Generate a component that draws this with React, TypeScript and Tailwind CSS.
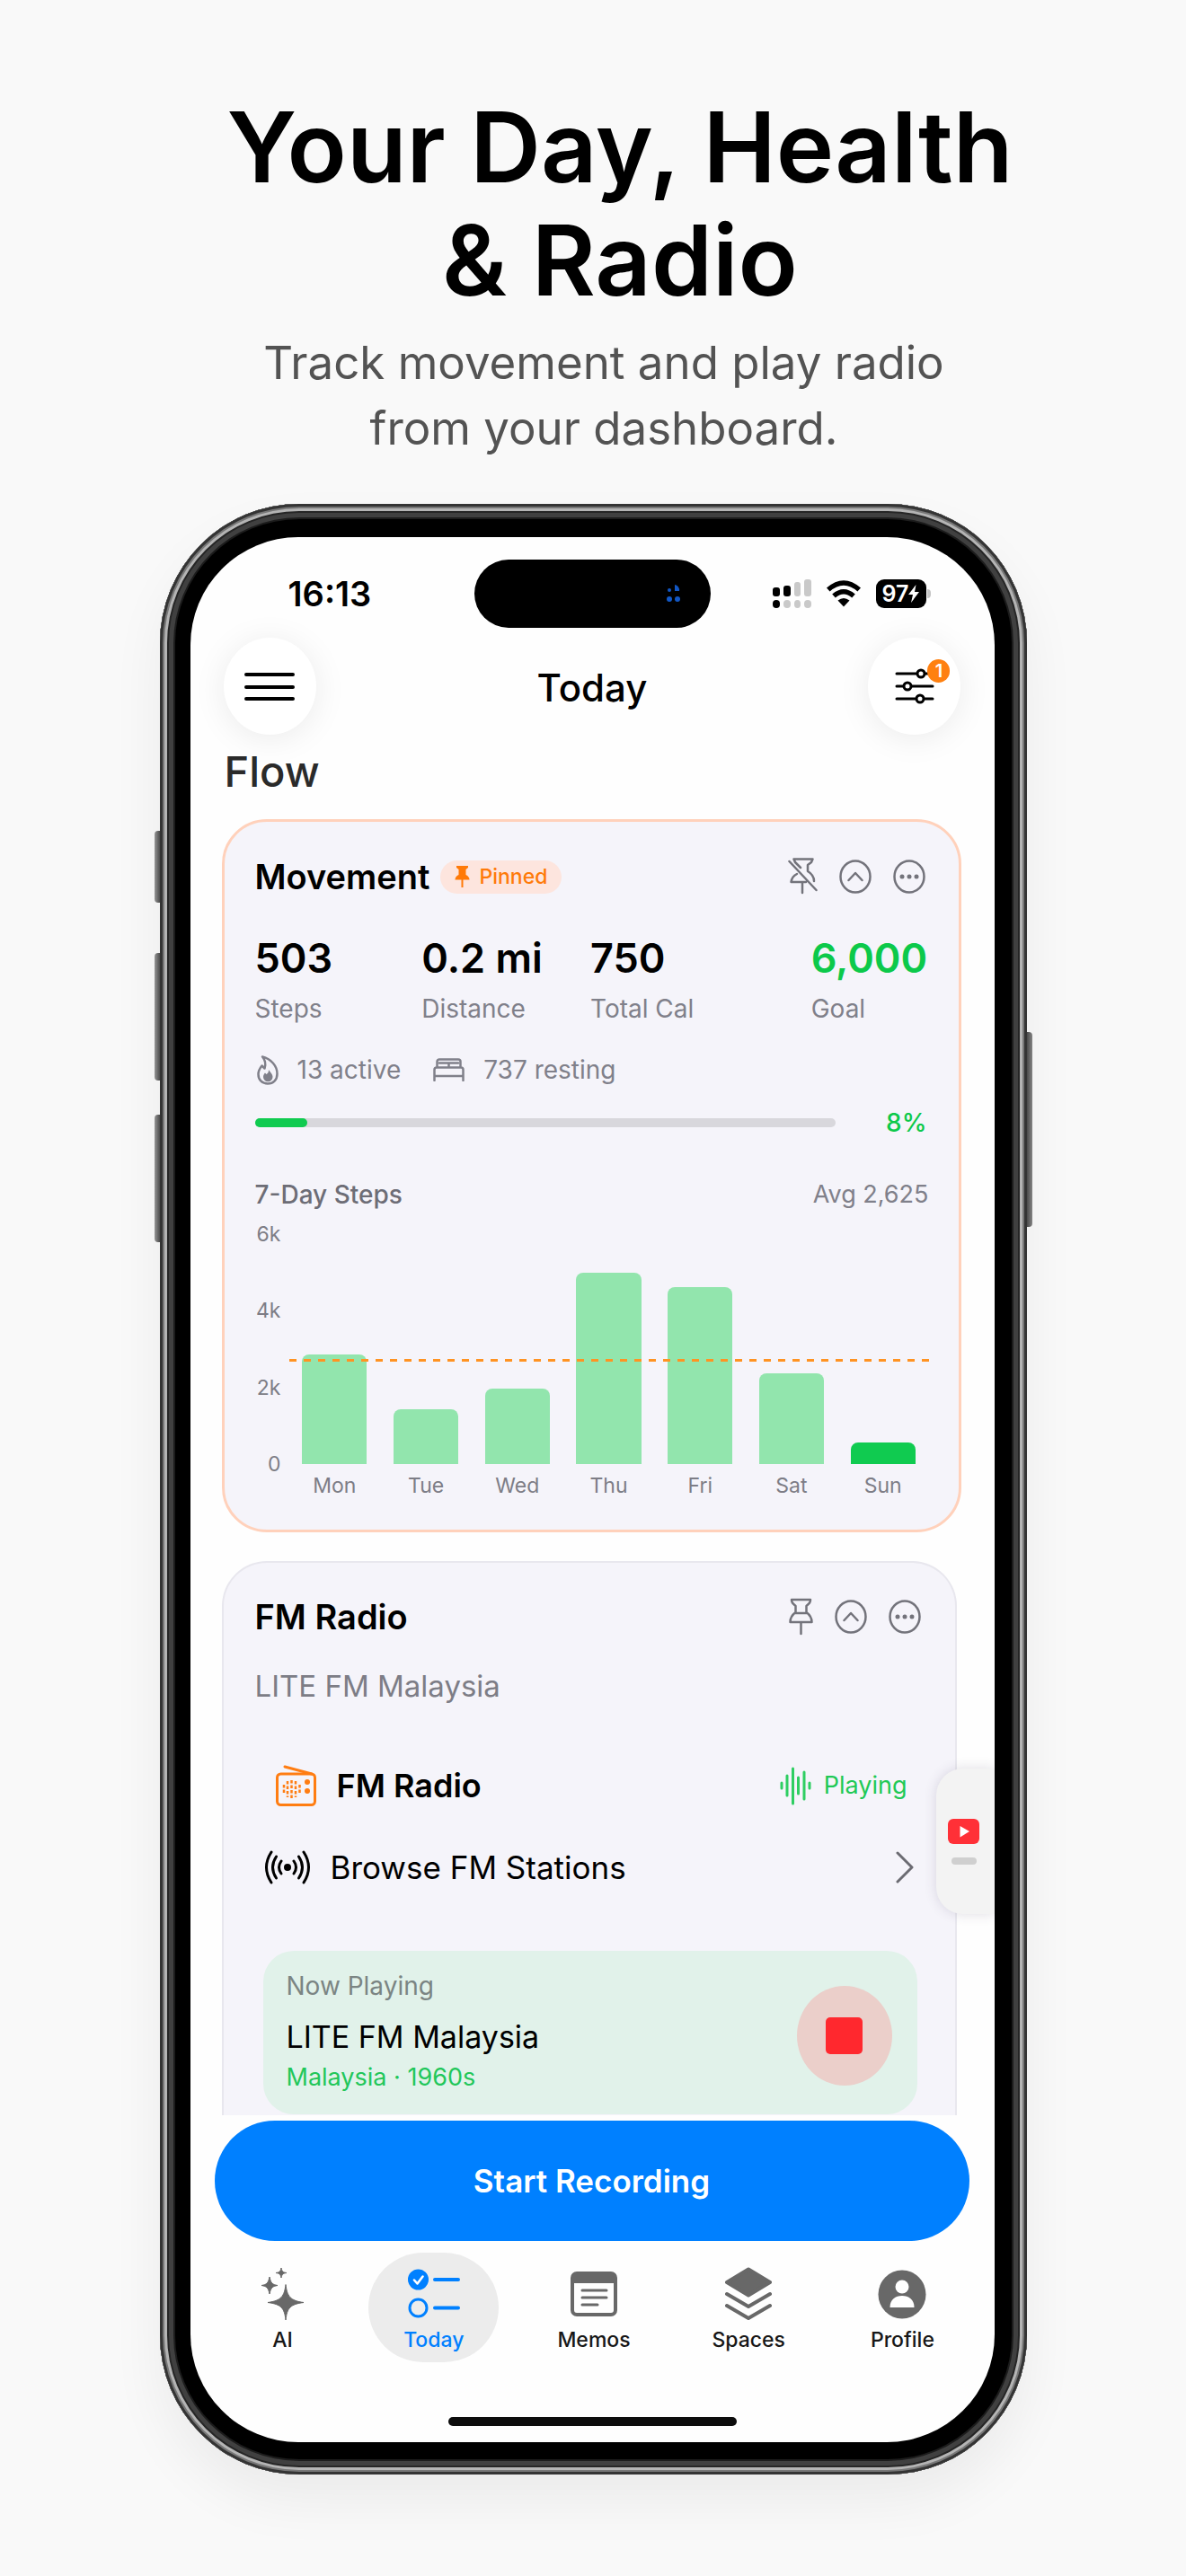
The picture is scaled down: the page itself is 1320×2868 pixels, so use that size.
import type { ReactNode } from "react"

const days = [
  { day: "Mon", steps: 2850 },
  { day: "Tue", steps: 1440 },
  { day: "Wed", steps: 1980 },
  { day: "Thu", steps: 5000 },
  { day: "Fri", steps: 4620 },
  { day: "Sat", steps: 2360 },
  { day: "Sun", steps: 560, today: true },
]

const stats = [
  { value: "503", label: "Steps" },
  { value: "0.2 mi", label: "Distance" },
  { value: "750", label: "Total Cal" },
  { value: "6,000", label: "Goal", goal: true },
]

function StatusBar() {
  return (
    <div className="grid grid-cols-[1fr_263px_1fr] items-center pt-[25px]">
      <div className="pl-[109px] text-[38px] leading-[44px] font-semibold">16:13</div>
      <div className="flex h-[76px] items-center justify-end rounded-full bg-black pr-[33px]">
        <svg width="16" height="20" viewBox="0 0 16 20" fill="#1257c4">
          <circle cx="3" cy="6" r="2" />
          <path d="M9 0a6 6 0 0 1 5 7H9z" />
          <circle cx="3" cy="16" r="3" />
          <circle cx="12" cy="16" r="3" />
        </svg>
      </div>
      <div className="flex items-center gap-[17px] pl-[69px]">
        <svg width="43" height="32" viewBox="0 0 43 32">
          <rect x="0" y="9" width="8" height="10" rx="3" />
          <rect x="12" y="7" width="8" height="12" rx="3" />
          <rect x="24" y="3" width="7" height="16" rx="3" fill="#c9c9c9" />
          <rect x="35" y="0" width="8" height="19" rx="3" fill="#c9c9c9" />
          <rect x="0" y="23" width="8" height="9" rx="4" />
          <rect x="12" y="23" width="8" height="9" rx="4" fill="#c9c9c9" />
          <rect x="24" y="23" width="7" height="9" rx="4" fill="#c9c9c9" />
          <rect x="35" y="23" width="8" height="9" rx="4" fill="#c9c9c9" />
        </svg>
        <svg width="38" height="30" viewBox="0 0 38 30" fill="none" stroke="#000" strokeWidth="5.5">
          <path d="M1.8 10.5Q19-4.500 36.200 10.500" />
          <path d="M8 17.500Q19 8 30 17.500" />
          <path d="M12.500 22.500Q19 17.500 25.500 22.500L19 29.500z" fill="#000" stroke="none" />
        </svg>
        <div className="flex items-center gap-px">
          <div className="flex h-8 w-14 items-center justify-center rounded-[9px] bg-black text-[25px] leading-8 font-semibold text-white">
            97
            <svg width="12" height="20" viewBox="0 0 12 20" fill="#fff">
              <path d="M8.500 0L0 11h5L3 20l9-12H7z" />
            </svg>
          </div>
          <div className="h-[10px] w-1 rounded-r-full bg-[#c4c4c4]" />
        </div>
      </div>
    </div>
  )
}

function Header() {
  return (
    <header className="mt-[11px] flex items-center justify-between px-[37px]">
      <button aria-label="Menu" className="flex h-[108px] w-[103px] items-center justify-center rounded-[50%] bg-white shadow-[0_4px_36px_rgba(0,0,0,0.08)]">
        <svg width="56" height="32" viewBox="0 0 56 32" stroke="#000" strokeWidth="4" strokeLinecap="round">
          <path d="M2 3h52M2 17h52M2 30h52" />
        </svg>
      </button>
      <h1 className="pt-1 text-[42px] leading-[52px] font-medium">Today</h1>
      <button aria-label="Filters, 1 active" className="relative flex h-[108px] w-[103px] items-center justify-center rounded-[50%] bg-white shadow-[0_4px_36px_rgba(0,0,0,0.08)]">
        <svg width="44" height="40" viewBox="0 0 44 40" fill="#fff" stroke="#000" strokeWidth="3" strokeLinecap="round">
          <path d="M2 6h40M2 20h40M2 34h40" />
          <circle cx="29" cy="6" r="4" />
          <circle cx="14" cy="20" r="4" />
          <circle cx="28" cy="34" r="4" />
        </svg>
        <span className="absolute top-6 right-3 flex h-[26px] w-[25px] items-center justify-center rounded-full bg-[#ff8010] text-[20px] leading-6 font-semibold text-white">1</span>
      </button>
    </header>
  )
}

function PinIcon() {
  return (
    <svg width="27" height="42" viewBox="0 0 27 42" fill="none" stroke="#73737b" strokeWidth="2.500" strokeLinecap="round" strokeLinejoin="round">
      <path d="M3 2h21c0 3-1 4-4.500 7v7c4 3 6 6 6 11H1.500c0-5 2-8 6-11V9C4 6 3 5 3 2zM8 17h11M13.500 27v13" />
    </svg>
  )
}

function UnpinIcon() {
  return (
    <svg width="33" height="42" viewBox="0 0 33 42" fill="none" stroke="#73737b" strokeWidth="2.500" strokeLinecap="round" strokeLinejoin="round">
      <path d="M14 11L8 5 6.500 1.500h21L26 5l-4 3v7c5 3 7 6 7 11M10 18c-4 2-6 5-6.500 9H20M16 27v12M1.500 4l30 32" />
    </svg>
  )
}

function CardActions({ pin, children }: { pin: string; children: ReactNode }) {
  return (
    <div className="ml-auto flex items-center gap-6 pr-1">
      <button aria-label={pin}>{children}</button>
      <button aria-label="Collapse">
        <svg width="36" height="38" viewBox="0 0 36 38" fill="none" stroke="#73737b" strokeWidth="2.500" strokeLinecap="round" strokeLinejoin="round">
          <ellipse cx="18" cy="19" rx="16.500" ry="17.500" />
          <path d="M10.500 23l7.500-8 7.500 8" />
        </svg>
      </button>
      <button aria-label="More">
        <svg width="36" height="38" viewBox="0 0 36 38" fill="none" stroke="#73737b" strokeWidth="2.500">
          <ellipse cx="18" cy="19" rx="16.500" ry="17.500" />
          <g fill="#73737b" stroke="none">
            <circle cx="10" cy="19" r="2.500" />
            <circle cx="18" cy="19" r="2.500" />
            <circle cx="26" cy="19" r="2.500" />
          </g>
        </svg>
      </button>
    </div>
  )
}

function StepsChart() {
  return (
    <div className="mt-[26px]">
      <div className="flex h-64">
        <div className="-my-4 flex w-[38px] flex-col justify-between pr-[9px] text-right text-[23px] leading-8 text-[#7d7d86]">
          <span>6k</span>
          <span>4k</span>
          <span>2k</span>
          <span>0</span>
        </div>
        <div className="relative flex flex-1 items-end">
          {days.map((d) => (
            <div key={d.day} className="flex h-full flex-1 items-end justify-center">
              <div
                className={d.today ? "w-[71%] rounded-t-lg bg-[#10cb50]" : "w-[71%] rounded-t-lg bg-[#92e5ad]"}
                style={{ height: `${(d.steps / 6000) * 100}%` }}
              />
            </div>
          ))}
          <svg className="absolute top-[139px] left-0 h-[3px] w-full">
            <line x1="0" y1="1.500" x2="100%" y2="1.500" stroke="#ff9322" strokeWidth="3" strokeDasharray="8 8" />
          </svg>
        </div>
      </div>
      <div className="mt-2 flex pl-[38px] text-center text-[23px] leading-8 text-[#7d7d86]">
        {days.map((d) => (
          <span key={d.day} className="flex-1">{d.day}</span>
        ))}
      </div>
    </div>
  )
}

function MovementCard() {
  return (
    <section className="mt-[23px] mr-[37px] ml-[35px] rounded-[50px] border-3 border-[#ffd1bb] bg-[#f5f4fa] pt-[41px] pr-[33px] pb-[33px] pl-[34px]">
      <div className="flex h-10 items-center">
        <h2 className="text-[38px] leading-10 font-semibold">Movement</h2>
        <span className="ml-3 flex h-[37px] items-center gap-[10px] rounded-full bg-[#fde5de] px-4 text-[23px] leading-8 font-medium text-[#ff7a08]">
          <svg width="17" height="24" viewBox="0 0 17 24" fill="#ff7a08">
            <path d="M2 0h13v2l-2.500 2v6q4 2 4 5.500H9.500V24h-2v-8.500H.5Q.5 12 4.500 10V4L2 2z" />
          </svg>
          Pinned
        </span>
        <CardActions pin="Unpin">
          <UnpinIcon />
        </CardActions>
      </div>
      <dl className="mt-[43px] grid grid-cols-[186fr_188fr_246fr_131fr]">
        {stats.map((s) => (
          <div key={s.label} className="flex flex-col-reverse gap-[10px] whitespace-nowrap">
            <dt className="text-[28px] leading-9 text-[#80808a]">{s.label}</dt>
            <dd className={s.goal ? "text-[45px] leading-[56px] font-semibold text-[#0cc94a]" : "text-[45px] leading-[56px] font-semibold"}>{s.value}</dd>
          </div>
        ))}
      </dl>
      <div className="mt-8 flex items-center text-[28px] leading-9 text-[#80808a]">
        <svg className="ml-[2px]" width="24" height="33" viewBox="0 0 24 33" fill="none" stroke="#80808a" strokeWidth="2.500" strokeLinejoin="round">
          <path d="M6 1.500C16 4 22.500 12 22.500 20.500c0 7-4.500 11-10.500 11s-10.500-4-10.500-10.500c0-4 2-7 4-9.500l3 3C10 10 9 5 6 1.500z" />
          <path d="M13 16c1 2 4.500 4.500 4.500 8a5 5 0 0 1-10.500 0c0-2 1-3.500 2-4.500l1.500 1.500c2-1 2.500-3 2.500-5z" fill="#80808a" stroke="none" />
        </svg>
        <span className="ml-[21px]">13 active</span>
        <svg className="ml-9" width="35" height="26" viewBox="0 0 35 26" fill="none" stroke="#80808a" strokeWidth="2.500" strokeLinecap="round">
          <path d="M4.500 10V4a2.500 2.500 0 0 1 2.500-2.500h21A2.500 2.500 0 0 1 30.500 4v6M7 5.500h21M17.500 6v4M1.500 25V13a2.500 2.500 0 0 1 2.500-2.500h27a2.500 2.500 0 0 1 2.500 2.500v12M2 20h31" />
        </svg>
        <span className="ml-[21px]">737 resting</span>
      </div>
      <div className="mt-[23px] flex items-center">
        <div className="h-[10px] flex-1 rounded-full bg-[#d8d7dc]">
          <div className="h-full w-[9%] rounded-full bg-[#10cb50]" />
        </div>
        <span className="w-[104px] pr-[2px] text-right text-[28px] leading-9 font-medium text-[#0cc94a]">8%</span>
      </div>
      <div className="mt-11 flex items-center justify-between text-[28px] leading-9">
        <h3 className="font-medium text-[#6d6d76]">7-Day Steps</h3>
        <span className="text-[27px] text-[#80808a]">Avg 2,625</span>
      </div>
      <StepsChart />
    </section>
  )
}

function RadioCard() {
  return (
    <section className="mt-8 mr-[42px] ml-[35px] rounded-t-[50px] border-2 border-b-0 border-[#e8e7ee] bg-[#f5f4fa] pt-10 pr-[34px] pb-px pl-[35px]">
      <div className="flex h-10 items-center">
        <h2 className="text-[38px] leading-10 font-semibold">FM Radio</h2>
        <CardActions pin="Pin">
          <PinIcon />
        </CardActions>
      </div>
      <p className="mt-9 text-[33px] leading-[42px] text-[#7d7d86]">LITE FM Malaysia</p>
      <div className="mt-[66px] flex h-12 items-center pr-[19px] pl-[23px]">
        <svg width="45" height="46" viewBox="0 0 45 46" fill="none" stroke="#ff7d12" strokeWidth="3" strokeLinecap="round">
          <rect x="1.500" y="10" width="42" height="34.500" rx="4" />
          <path d="M10 2l30 8" />
          <path d="M9 22v11M13 18v18M17.500 17v20M22 18v18M26.500 22v11" strokeWidth="2.500" strokeDasharray="3.500 2" strokeLinecap="butt" />
          <g fill="#ff7d12" stroke="none">
            <circle cx="35" cy="19" r="3" />
            <circle cx="35" cy="29" r="3" />
          </g>
        </svg>
        <h3 className="ml-[23px] text-[36px] leading-[44px] font-semibold">FM Radio</h3>
        <svg className="ml-auto" width="35" height="43" viewBox="0 0 35 43" stroke="#2fce62" strokeWidth="3" strokeLinecap="round">
          <path d="M2 18v6M8 10v22M14.500 2v39M20.500 12v18M27 6v30M33 18v6" />
        </svg>
        <span className="ml-[14px] text-[27px] leading-9 text-[#1fc956]">Playing</span>
      </div>
      <a href="#stations" className="mt-[43px] flex h-12 items-center pr-3 pl-[10px]">
        <svg width="52" height="38" viewBox="0 0 52 38" fill="none" stroke="#000" strokeWidth="3" strokeLinecap="round">
          <circle cx="26" cy="19" r="4" fill="#000" stroke="none" />
          <path d="M33 12q5 7 0 14M19 12q-5 7 0 14M38.500 7q8 12 0 24M13.500 7q-8 12 0 24M44 2q11 17 0 34M8 2q-11 17 0 34" />
        </svg>
        <span className="ml-[22px] text-[35px] leading-[44px]">Browse FM Stations</span>
        <svg className="ml-auto" width="20" height="36" viewBox="0 0 20 36" fill="none" stroke="#6b6b72" strokeWidth="3" strokeLinecap="round" strokeLinejoin="round">
          <path d="M2 2l16 16L2 34" />
        </svg>
      </a>
      <div className="mt-[69px] mr-2 ml-[9px] flex items-center justify-between rounded-[34px] bg-[#e1f2ea] pt-[22px] pr-[28px] pb-6 pl-[26px]">
        <div>
          <p className="text-[28px] leading-[34px] text-[#7b8583]">Now Playing</p>
          <p className="mt-[18px] text-[34px] leading-[44px]">LITE FM Malaysia</p>
          <p className="mt-[6px] text-[27px] leading-[34px] text-[#22c75a]">Malaysia · 1960s</p>
        </div>
        <button aria-label="Stop" className="mt-2 flex h-[111px] w-[106px] items-center justify-center rounded-[50%] bg-[#ebcfca]">
          <span className="h-[41px] w-[41px] rounded-[5px] bg-[#ff282e]" />
        </button>
      </div>
    </section>
  )
}

function Tab({ label, active, children }: { label: string; active?: boolean; children: ReactNode }) {
  return (
    <a
      href="#tab"
      className={
        active
          ? "flex h-[122px] w-[145px] flex-col items-center justify-self-center rounded-full bg-[#ececec] pt-4 text-[#0080ff]"
          : "flex h-[122px] w-[145px] flex-col items-center justify-self-center pt-4 text-[#171717]"
      }
    >
      <span className="flex h-[60px] items-center">{children}</span>
      <span className="mt-[6px] text-[23px] leading-[30px] font-medium">{label}</span>
    </a>
  )
}

function TabBar() {
  return (
    <nav className="mt-[13px] grid grid-cols-[150fr_186fr_170fr_174fr_168fr] pr-[18px] pl-7">
      <Tab label="AI">
        <svg width="47" height="58" viewBox="0 0 47 58" fill="#686868">
          <path d="M27 18.500c1.500 13 5 18 20 20-15 2-18.500 6-20 19.500-1.500-13.500-5-17.500-20-19.500 15-2 18.500-7 20-20zM9 10c1.500 7 3 8.500 9 9.500-6 1-7.500 2.500-9 9.500-1.500-7-3-8.500-9-9.500 6-1 7.500-2.500 9-9.500zM22 0c.8 4 2 5 6 5.500-4 .500-5.200 1.500-6 5.500-.8-4-2-5-6-5.500 4-.500 5.200-1.500 6-5.500z" stroke="#686868" strokeWidth="1" strokeLinejoin="round" />
        </svg>
      </Tab>
      <Tab label="Today" active>
        <svg width="58" height="56" viewBox="0 0 58 56" fill="none" stroke="#0080ff" strokeWidth="3" strokeLinecap="round" strokeLinejoin="round">
          <circle cx="11.500" cy="12" r="10" fill="#0080ff" />
          <path d="M7 12.500l3.500 4 6-8" stroke="#fff" strokeWidth="2.500" />
          <circle cx="11.500" cy="43.500" r="9.500" />
          <path d="M30 12h26M30 43.500h26" strokeWidth="4" />
        </svg>
      </Tab>
      <Tab label="Memos">
        <svg width="52" height="50" viewBox="0 0 52 50" fill="none" stroke="#686868" strokeWidth="3" strokeLinecap="round">
          <rect x="2" y="2" width="48" height="46" rx="5" strokeWidth="4" />
          <path d="M3 4h46v9H3z" fill="#686868" stroke="none" />
          <path d="M13 21h27M13 29h27M13 37h17" />
        </svg>
      </Tab>
      <Tab label="Spaces">
        <svg width="52" height="60" viewBox="0 0 52 60" fill="none" stroke="#686868" strokeWidth="4" strokeLinecap="round" strokeLinejoin="round">
          <path d="M26 2.500L50 17 26 31.500 2 17z" fill="#686868" />
          <path d="M2 30l24 14 24-14M2 43l24 14 24-14" />
        </svg>
      </Tab>
      <Tab label="Profile">
        <svg width="54" height="55" viewBox="0 0 54 55" fill="#686868">
          <ellipse cx="27" cy="27.500" rx="26.500" ry="27" />
          <circle cx="27" cy="19" r="7.500" fill="#fff" />
          <path d="M13.500 42c0-9 6-13 13.500-13s13.500 4 13.500 13z" fill="#fff" />
        </svg>
      </Tab>
    </nav>
  )
}

export default function App() {
  return (
    <div className="min-h-screen bg-[#f9f9f9] px-6 pt-[100px] pb-[113px] font-['Inter',sans-serif] text-black">
      <div className="pl-[60px] text-center text-[109px] leading-[126px] font-semibold">
        <p>Your Day, Health</p>
        <p>&amp; Radio</p>
      </div>
      <div className="mt-[15px] pl-6 text-center text-[51px] leading-[73px] text-[#535353]">
        <p>Track movement and play radio</p>
        <p>from your dashboard.</p>
      </div>

      <div className="relative mx-auto mt-12 w-full max-w-[965px]">
        {/* side keys */}
        <div className="absolute top-[364px] -left-[6px] h-20 w-2 rounded-l-sm bg-linear-to-r from-[#9a9a9a] to-[#3a3a3a]" />
        <div className="absolute top-[500px] -left-[6px] h-[142px] w-2 rounded-l-sm bg-linear-to-r from-[#9a9a9a] to-[#3a3a3a]" />
        <div className="absolute top-[680px] -left-[6px] h-[142px] w-2 rounded-l-sm bg-linear-to-r from-[#9a9a9a] to-[#3a3a3a]" />
        <div className="absolute top-[588px] -right-[6px] h-[217px] w-2 rounded-r-sm bg-linear-to-l from-[#8a8a8a] to-[#3a3a3a]" />

        <div className="relative rounded-[155px] bg-black pt-[37px] pr-9 pb-9 pl-[34px] shadow-[inset_0_0_0_3px_#343434,inset_0_0_0_5px_#777,inset_0_0_0_8px_#b4b4b4,inset_0_0_0_10px_#262626,inset_0_0_0_15px_#404040,inset_0_0_0_17px_#1c1c1c,0_30px_60px_rgba(0,0,0,0.06)]">
          <main className="relative overflow-hidden rounded-[120px] bg-[#fefefe] pb-[18px]">
            <StatusBar />
            <Header />
            <p className="mt-[11px] pl-[38px] text-[47px] leading-[60px] font-medium text-[#2a2a2a]">Flow</p>
            <MovementCard />
            <RadioCard />
            <button className="mt-[6px] ml-[27px] block h-[134px] w-[calc(100%-55px)] rounded-full bg-[#0080ff] text-[35px] leading-[44px] font-semibold text-white">Start Recording</button>
            <TabBar />
            <div className="mx-auto mt-[61px] h-[10px] w-[321px] rounded-full bg-[#0c0c0c]" />

            <button aria-label="Open video player" className="absolute top-[1371px] right-0 flex h-[162px] w-[65px] flex-col items-center justify-center rounded-l-[30px] bg-[#f3f3f3] pr-[3px] shadow-[0_0_14px_rgba(60,50,90,0.16)]">
              <svg width="35" height="28" viewBox="0 0 35 28">
                <rect width="35" height="28" rx="6" fill="#ff3037" />
                <path d="M13.500 8v12.500L24 14z" fill="#fff" />
              </svg>
              <span className="mt-[15px] h-2 w-7 rounded-full bg-[#cfcfcf]" />
            </button>
          </main>
        </div>
      </div>
    </div>
  )
}
